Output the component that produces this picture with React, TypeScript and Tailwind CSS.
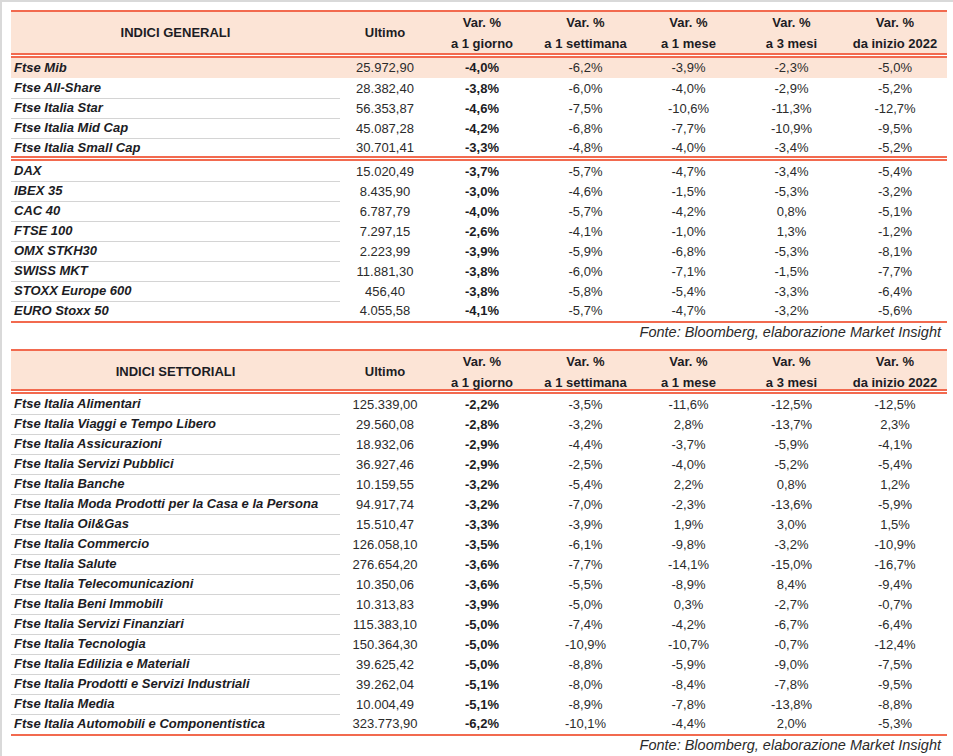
type Row = [string, string, string, string, string, string, string];

const generali: Row[][] = [
  [
    ["Ftse Mib", "25.972,90", "-4,0%", "-6,2%", "-3,9%", "-2,3%", "-5,0%"],
    ["Ftse All-Share", "28.382,40", "-3,8%", "-6,0%", "-4,0%", "-2,9%", "-5,2%"],
    ["Ftse Italia Star", "56.353,87", "-4,6%", "-7,5%", "-10,6%", "-11,3%", "-12,7%"],
    ["Ftse Italia Mid Cap", "45.087,28", "-4,2%", "-6,8%", "-7,7%", "-10,9%", "-9,5%"],
    ["Ftse Italia Small Cap", "30.701,41", "-3,3%", "-4,8%", "-4,0%", "-3,4%", "-5,2%"],
  ],
  [
    ["DAX", "15.020,49", "-3,7%", "-5,7%", "-4,7%", "-3,4%", "-5,4%"],
    ["IBEX 35", "8.435,90", "-3,0%", "-4,6%", "-1,5%", "-5,3%", "-3,2%"],
    ["CAC 40", "6.787,79", "-4,0%", "-5,7%", "-4,2%", "0,8%", "-5,1%"],
    ["FTSE 100", "7.297,15", "-2,6%", "-4,1%", "-1,0%", "1,3%", "-1,2%"],
    ["OMX STKH30", "2.223,99", "-3,9%", "-5,9%", "-6,8%", "-5,3%", "-8,1%"],
    ["SWISS MKT", "11.881,30", "-3,8%", "-6,0%", "-7,1%", "-1,5%", "-7,7%"],
    ["STOXX Europe 600", "456,40", "-3,8%", "-5,8%", "-5,4%", "-3,3%", "-6,4%"],
    ["EURO Stoxx 50", "4.055,58", "-4,1%", "-5,7%", "-4,7%", "-3,2%", "-5,6%"],
  ],
];

const settoriali: Row[] = [
  ["Ftse Italia Alimentari", "125.339,00", "-2,2%", "-3,5%", "-11,6%", "-12,5%", "-12,5%"],
  ["Ftse Italia Viaggi e Tempo Libero", "29.560,08", "-2,8%", "-3,2%", "2,8%", "-13,7%", "2,3%"],
  ["Ftse Italia Assicurazioni", "18.932,06", "-2,9%", "-4,4%", "-3,7%", "-5,9%", "-4,1%"],
  ["Ftse Italia Servizi Pubblici", "36.927,46", "-2,9%", "-2,5%", "-4,0%", "-5,2%", "-5,4%"],
  ["Ftse Italia Banche", "10.159,55", "-3,2%", "-5,4%", "2,2%", "0,8%", "1,2%"],
  ["Ftse Italia Moda Prodotti per la Casa e la Persona", "94.917,74", "-3,2%", "-7,0%", "-2,3%", "-13,6%", "-5,9%"],
  ["Ftse Italia Oil&Gas", "15.510,47", "-3,3%", "-3,9%", "1,9%", "3,0%", "1,5%"],
  ["Ftse Italia Commercio", "126.058,10", "-3,5%", "-6,1%", "-9,8%", "-3,2%", "-10,9%"],
  ["Ftse Italia Salute", "276.654,20", "-3,6%", "-7,7%", "-14,1%", "-15,0%", "-16,7%"],
  ["Ftse Italia Telecomunicazioni", "10.350,06", "-3,6%", "-5,5%", "-8,9%", "8,4%", "-9,4%"],
  ["Ftse Italia Beni Immobili", "10.313,83", "-3,9%", "-5,0%", "0,3%", "-2,7%", "-0,7%"],
  ["Ftse Italia Servizi Finanziari", "115.383,10", "-5,0%", "-7,4%", "-4,2%", "-6,7%", "-6,4%"],
  ["Ftse Italia Tecnologia", "150.364,30", "-5,0%", "-10,9%", "-10,7%", "-0,7%", "-12,4%"],
  ["Ftse Italia Edilizia e Materiali", "39.625,42", "-5,0%", "-8,8%", "-5,9%", "-9,0%", "-7,5%"],
  ["Ftse Italia Prodotti e Servizi Industriali", "39.262,04", "-5,1%", "-8,0%", "-8,4%", "-7,8%", "-9,5%"],
  ["Ftse Italia Media", "10.004,49", "-5,1%", "-8,9%", "-7,8%", "-13,8%", "-8,8%"],
  ["Ftse Italia Automobili e Componentistica", "323.773,90", "-6,2%", "-10,1%", "-4,4%", "2,0%", "-5,3%"],
];

const cols = "grid grid-cols-[329px_90px_104px_103px_103px_103px_104px]";

const periods = ["a 1 giorno", "a 1 settimana", "a 1 mese", "a 3 mesi", "da inizio 2022"];

function DoubleRule() {
  return (
    <div>
      <div className="h-[2px] bg-[#f26a4f]" />
      <div className="h-px bg-white" />
      <div className="h-[2px] bg-[#f26a4f]" />
    </div>
  );
}

function Header({ title, tall }: { title: string; tall?: boolean }) {
  return (
    <div className={`${cols} bg-[#fce4d6] font-bold text-[13px] ${tall ? "h-[41px]" : "h-[38px]"}`}>
      <div className="flex items-center justify-center">{title}</div>
      <div className="flex items-center justify-center">Ultimo</div>
      {periods.map((p) => (
        <div key={p} className="flex flex-col items-center justify-center leading-[21px]">
          <span>Var. %</span>
          <span>{p}</span>
        </div>
      ))}
    </div>
  );
}

function DataRow({ row, line, highlight, short }: { row: Row; line: boolean; highlight?: boolean; short?: boolean }) {
  return (
    <div className={`${cols} text-[13px] ${short ? "h-[18px]" : "h-5"} ${highlight ? "bg-[#fce4d6]" : ""}`}>
      <div className={`flex items-center pl-[3px] font-bold italic ${line ? "border-b border-[#d4d4d4]" : ""}`}>
        {row[0]}
      </div>
      <div className="flex items-center justify-center text-[#2b2b2b]">{row[1]}</div>
      <div className="flex items-center justify-center font-bold">{row[2]}</div>
      {row.slice(3).map((v, i) => (
        <div key={i} className="flex items-center justify-center text-[#2b2b2b]">
          {v}
        </div>
      ))}
    </div>
  );
}

function Fonte() {
  return (
    <div className="flex h-5 items-center justify-end pr-[6px] text-[14.5px] italic text-[#2b2b2b]">
      Fonte: Bloomberg, elaborazione Market Insight
    </div>
  );
}

export default function App() {
  return (
    <div
      className="min-h-[756px] border-l-2 border-t-2 border-[#d9d9d9] bg-white pl-[9px] pt-[8px] text-[#1c1c24]"
      style={{ fontFamily: '"Liberation Sans", Arial, sans-serif' }}
    >
      <div className="w-[936px]">
        <div className="h-[2px] bg-[#f26a4f]" />
        <Header title="INDICI GENERALI" tall />
        <DoubleRule />
        {generali[0].map((r, i) => (
          <DataRow key={r[0]} row={r} highlight={i === 0} line={i > 0 && i < generali[0].length - 1} short={i === generali[0].length - 1} />
        ))}
        <DoubleRule />
        {generali[1].map((r, i) => (
          <DataRow key={r[0]} row={r} line={i < generali[1].length - 1} />
        ))}
        <div className="h-[2px] bg-[#f26a4f]" />
        <Fonte />

        <div className="mt-[6px] h-[2px] bg-[#f26a4f]" />
        <Header title="INDICI SETTORIALI" />
        <DoubleRule />
        {settoriali.map((r, i) => (
          <DataRow key={r[0]} row={r} line={i < settoriali.length - 1} />
        ))}
        <div className="h-[2px] bg-[#f26a4f]" />
        <Fonte />
      </div>
    </div>
  );
}
